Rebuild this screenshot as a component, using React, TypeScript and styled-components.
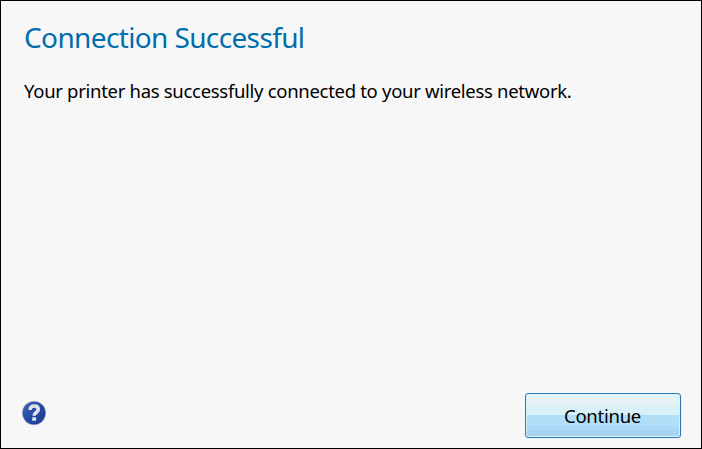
import React from "react";
import styled, { createGlobalStyle } from "styled-components";

const GlobalStyle = createGlobalStyle`
  * { box-sizing: border-box; }
  body { margin: 0; background: #f7f7f7; }
`;

const Dialog = styled.main`
  display: flex;
  flex-direction: column;
  width: 702px;
  height: 449px;
  border: 1px solid #000;
  padding: 16px 20px 10px 23px;
  background: #f7f7f7;
  color: #000;
  font-family: "Noto Sans", "Open Sans", sans-serif;
`;

const Title = styled.h1`
  margin: 0;
  font-size: 28px;
  line-height: 40px;
  font-weight: 400;
  letter-spacing: -0.63px;
  color: #006dac;
  white-space: nowrap;
`;

const Message = styled.p`
  margin: 21px 0 0;
  font-size: 18.5px;
  line-height: 26px;
  letter-spacing: -0.3px;
  white-space: nowrap;
`;

const Footer = styled.footer`
  display: flex;
  align-items: flex-end;
  justify-content: space-between;
  margin-top: auto;
`;

const HelpButton = styled.button`
  display: block;
  width: 26px;
  height: 26px;
  margin: 0 0 12px -3px;
  padding: 0;
  border: 0;
  background: none;
`;

const PrimaryButton = styled.button`
  width: 156px;
  height: 45px;
  padding: 0 1px 0 0;
  border: 1px solid #2c7bb9;
  border-radius: 3px;
  background: linear-gradient(#e4f1f6 0 12px, #d8f0f7 12px 21px, #b3def7 21px 32px, #afd8f8 32px 36px, #a6d6ef 36px);
  box-shadow: inset 0 0 0 1px #d9f0fa, 1px 1px 0 #e9eef2;
  color: #000;
  font: 400 18.5px/26px "Noto Sans", "Open Sans", sans-serif;
  letter-spacing: -0.25px;
`;

function HelpIcon() {
  return (
    <svg width="26" height="26" viewBox="0 0 26 26" aria-hidden="true">
      <defs>
        <linearGradient id="helpBlue" x1="0" y1="0" x2="1" y2="1">
          <stop offset="0" stopColor="#4b66b4" />
          <stop offset="0.5" stopColor="#2249a4" />
          <stop offset="1" stopColor="#253b96" />
        </linearGradient>
      </defs>
      <circle cx="13" cy="13" r="12.2" fill="#d0d4dc" />
      <circle cx="13" cy="13" r="11.5" fill="url(#helpBlue)" />
      <path d="M9.1 10.1C9.1 7.3 10.7 6.1 13.3 6.1C16 6.1 17.3 7.5 17.3 9.5C17.3 12.2 13.1 12.4 13.1 15.8" fill="none" stroke="#e3e4e4" strokeWidth="3.5" />
      <rect x="11.2" y="17.2" width="3.9" height="3.5" rx="0.6" fill="#e3e4e4" />
    </svg>
  );
}

export default function App() {
  return (
    <>
      <GlobalStyle />
      <Dialog>
        <Title>Connection Successful</Title>
        <Message>Your printer has successfully connected to your wireless network.</Message>
        <Footer>
          <HelpButton type="button" aria-label="Help">
            <HelpIcon />
          </HelpButton>
          <PrimaryButton type="button">Continue</PrimaryButton>
        </Footer>
      </Dialog>
    </>
  );
}
